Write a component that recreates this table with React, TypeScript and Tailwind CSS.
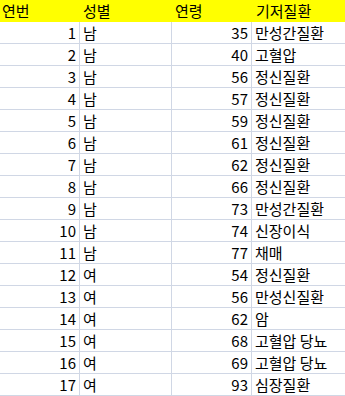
const rows: [number, string, number, string][] = [
  [1, "남", 35, "만성간질환"],
  [2, "남", 40, "고혈압"],
  [3, "남", 56, "정신질환"],
  [4, "남", 57, "정신질환"],
  [5, "남", 59, "정신질환"],
  [6, "남", 61, "정신질환"],
  [7, "남", 62, "정신질환"],
  [8, "남", 66, "정신질환"],
  [9, "남", 73, "만성간질환"],
  [10, "남", 74, "신장이식"],
  [11, "남", 77, "채매"],
  [12, "여", 54, "정신질환"],
  [13, "여", 56, "만성신질환"],
  [14, "여", 62, "암"],
  [15, "여", 68, "고혈압 당뇨"],
  [16, "여", 69, "고혈압 당뇨"],
  [17, "여", 93, "심장질환"],
];

const cols = "grid grid-cols-[80px_92px_80px_1fr]";
const cell = "h-[22px] border-b border-r border-[#d0d7e5] flex items-center leading-none";

export default function App() {
  return (
    <div
      className="w-[345px] h-[396px] overflow-hidden bg-white text-[15px] text-black"
      style={{ fontFamily: '"Noto Sans CJK KR", "Noto Sans", sans-serif' }}
    >
      {/* 헤더 */}
      <div className={`${cols} h-[22px] bg-[#ffff00]`}>
        <div className="flex items-center pl-[2px]">연번</div>
        <div className="flex items-center pl-[3px]">성별</div>
        <div className="flex items-center pl-[3px]">연령</div>
        <div className="flex items-center pl-[4px]">기저질환</div>
      </div>
      {rows.map(([no, sex, age, disease]) => (
        <div key={no} className={cols}>
          <div className={`${cell} justify-end pr-[3px]`}>{no}</div>
          <div className={`${cell} pl-[3px]`}>{sex}</div>
          <div className={`${cell} justify-end pr-[3px]`}>{age}</div>
          <div className={`${cell} border-r-0 pl-[3px] whitespace-nowrap`}>{disease}</div>
        </div>
      ))}
    </div>
  );
}
